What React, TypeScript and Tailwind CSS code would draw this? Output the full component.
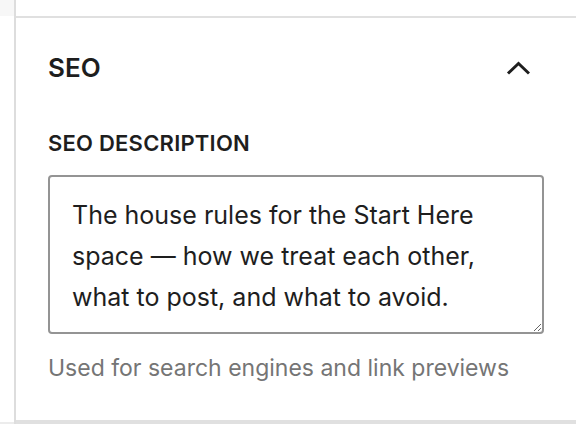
const ChevronUp = () => (
  <svg width="24" height="14" viewBox="0 0 24 14" fill="none" className="block">
    <path d="M2 12.5 L12.5 2.5 L23 12.5" stroke="#1e1e1e" strokeWidth="3" />
  </svg>
);

export default function App() {
  return (
    <div className="flex h-[438px] w-[576px] bg-white font-['Inter',sans-serif] text-[#1e1e1e]">
      <div className="flex h-[424px] w-[14px] flex-col border-b-2 border-[#ececec]">
        <div className="h-[16px] bg-[#f7f7f7]" />
      </div>
      <div className="flex h-[424px] flex-1 flex-col border-l-2 border-[#dddddd]">
        <div className="h-[16px] shrink-0" />
        <section className="flex-1 border-t-2 border-b-4 border-[#e0e0e0] px-8 pt-[34px]">
          <div className="flex items-center justify-between">
            <h2 className="text-[26px] leading-[32px] font-semibold">SEO</h2>
            <div className="mr-[14px]">
              <ChevronUp />
            </div>
          </div>
          <label className="mt-[45px] block text-[22px] leading-[28px] font-semibold tracking-[0.01em]">
            SEO DESCRIPTION
          </label>
          <textarea
            className="mt-[18px] block h-[159px] w-full resize-y rounded-[4px] border-2 border-[#949494] pr-[40px] pl-[22px] pt-[18px] text-[25px] leading-[41px] text-[#1e1e1e] outline-none"
            defaultValue="The house rules for the Start Here space — how we treat each other, what to post, and what to avoid."
          />
          <p className="mt-[20px] text-[23px] leading-[28px] text-[#757575]">
            Used for search engines and link previews
          </p>
        </section>
      </div>
    </div>
  );
}
